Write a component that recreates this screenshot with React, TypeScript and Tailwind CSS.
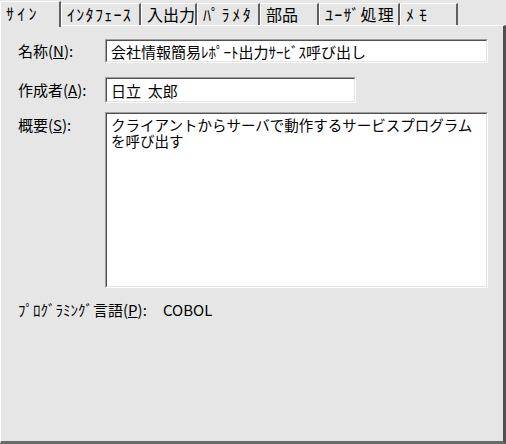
const TABS = [
  { label: 'ｲﾝﾀﾌｪｰｽ', w: 'w-[80px]', t: 'tracking-[1.3px]' },
  { label: '入出力', w: 'w-[56px]', t: '' },
  { label: 'ﾊﾟﾗﾒﾀ', w: 'w-[63px]', t: 'tracking-[2.6px]' },
  { label: '部品', w: 'w-[59px]', t: '' },
  { label: 'ﾕｰｻﾞ処理', w: 'w-[81px]', t: 'tracking-[1.2px]' },
  { label: 'ﾒﾓ', w: 'w-[58px]', t: 'tracking-[5px]' },
]

function Sunken({ className, children }: { className: string; children?: React.ReactNode }) {
  return (
    <div className={`border border-t-[#a0a0a0] border-l-[#a0a0a0] border-r-white border-b-white ${className}`}>
      <div className="h-full w-full border border-t-[#505050] border-l-[#505050] border-r-[#e3e3e3] border-b-[#e3e3e3] bg-white">
        {children}
      </div>
    </div>
  )
}

export default function App() {
  return (
    <div
      className="relative h-[444px] w-[506px] overflow-hidden bg-[#e6e6e6] text-[15px] leading-[16px] text-black"
      style={{ fontFamily: '"Noto Sans CJK JP", "Noto Sans", sans-serif' }}
    >
      {/* tab strip */}
      <div className="flex h-[25px] items-end whitespace-nowrap text-[16px]">
        <div className="relative z-10 mb-[-2px] flex h-[26px] w-[61px] shrink-0 items-start border-l border-t border-r-2 border-l-white border-t-white border-r-[#606060] bg-[#e6e6e6] pl-[5px] pt-[3px] tracking-[3.3px]">
          ｻｲﾝ
        </div>
        {TABS.map((t) => (
          <div
            key={t.label}
            className={`flex h-[22px] shrink-0 ${t.w} ${t.t} items-start overflow-hidden border-l border-t border-r-2 border-l-white border-t-white border-r-[#606060] bg-[#e6e6e6] pl-[5px] pt-[2px]`}
          >
            {t.label}
          </div>
        ))}
      </div>
      <div className="flex h-[419px] flex-col border-l border-t border-r-[3px] border-b-[3px] border-l-white border-t-white border-r-[#505050] border-b-[#6a6a6a] pl-[17px] pr-[15px] pt-[13px]">
        <div className="flex items-center">
          <div className="w-[87px]">
            名称(<span className="underline">N</span>):
          </div>
          <Sunken className="h-[24px] flex-1">
            <div className="pl-[4px] pt-[3px]">会社情報簡易ﾚﾎﾟｰﾄ出力ｻｰﾋﾞｽ呼び出し</div>
          </Sunken>
        </div>
        <div className="mt-[14px] flex items-center">
          <div className="w-[87px]">
            作成者(<span className="underline">A</span>):
          </div>
          <Sunken className="h-[26px] w-[251px]">
            <div className="pl-[4px] pt-[4px]">日立&nbsp;&nbsp;太郎</div>
          </Sunken>
        </div>
        <div className="mt-[9px] flex items-start">
          <div className="w-[87px] pt-[5px]">
            概要(<span className="underline">S</span>):
          </div>
          <Sunken className="h-[176px] flex-1">
            <div className="whitespace-nowrap pl-[4px] pt-[3px] text-[14.5px] leading-[16px]">
              クライアントからサーバで動作するサービスプログラム
              <br />
              を呼び出す
            </div>
          </Sunken>
        </div>
        <div className="mt-[14px] flex items-center">
          <div className="w-[145px]">
            ﾌﾟﾛｸﾞﾗﾐﾝｸﾞ言語(<span className="underline">P</span>):
          </div>
          <div>COBOL</div>
        </div>
      </div>
    </div>
  )
}
